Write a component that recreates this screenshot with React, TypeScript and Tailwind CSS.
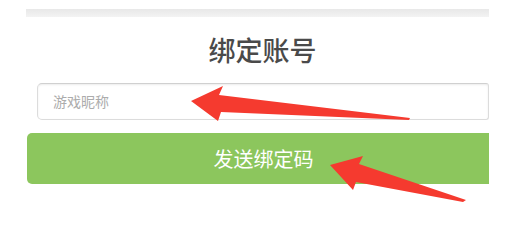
export default function App() {
    return (
        <div className="relative w-[509px] h-[207px] overflow-hidden bg-white font-['Noto_Sans_CJK_SC',sans-serif]">
            <div className="pt-[9px]">
                <div className="ml-[26px] w-[463px] h-[8px] bg-gradient-to-b from-[#e8e8e8] to-[#f3f3f3]" />

                <h1 className="mt-[15px] h-[36px] pl-[16px] text-center text-[27px] leading-[36px] font-medium text-[#4a4a4a]">
                    绑定账号
                </h1>

                <div className="mt-[15px] ml-[37px] w-[452px] h-[37px] rounded-l-[5px] rounded-r-[3px] border border-[#dcdcdc] border-t-[#d0d0d0] shadow-[inset_0_1px_2px_rgba(0,0,0,0.08)] flex items-center pl-[15px]">
                    <span className="text-[14px] text-[#acacac]">游戏昵称</span>
                </div>

                <button className="mt-[13px] ml-[27px] w-[462px] h-[51px] rounded-l-[5px] bg-[#8cc65d] pl-[11px] flex items-center justify-center text-[20px] text-white">
                    发送绑定码
                </button>
            </div>

            {/* red annotation arrows */}
            <svg className="absolute inset-0" width="509" height="207" viewBox="0 0 509 207">
                <polygon
                    points="191,101 223,86 219,95 410,118 409,120 221,112 218,121"
                    fill="#f53a2f"
                />
                <polygon
                    points="330,165 363,156 359,164 466,200 463,202 356,182 353,190"
                    fill="#f53a2f"
                />
            </svg>
        </div>
    )
}
